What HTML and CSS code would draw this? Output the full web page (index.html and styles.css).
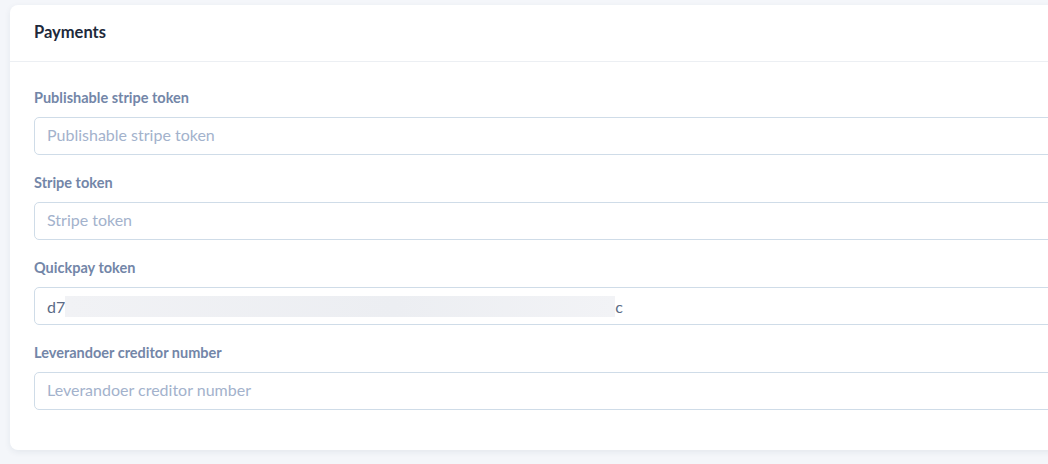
FILE: index.html
```html
<!DOCTYPE html>
<html>
<head>
  <meta charset="UTF-8">
  <title>Payments</title>
  <link rel="stylesheet" href="styles.css">
</head>
<body>
  <div class="card">
    <div class="card-header">Payments</div>
    <div class="card-body">
      <div class="field">
        <label for="pub">Publishable stripe token</label>
        <input id="pub" type="text" placeholder="Publishable stripe token">
      </div>
      <div class="field">
        <label for="stripe">Stripe token</label>
        <input id="stripe" type="text" placeholder="Stripe token">
      </div>
      <div class="field">
        <label>Quickpay token</label>
        <div class="input filled">d7<span class="redacted"></span>c</div>
      </div>
      <div class="field">
        <label for="lev">Leverandoer creditor number</label>
        <input id="lev" type="text" placeholder="Leverandoer creditor number">
      </div>
    </div>
  </div>
</body>
</html>
```

FILE: styles.css
```css
body {
  margin: 0;
  padding: 5px 0 0 10px;
  background: #f4f6fa;
  font-family: Lato, "Noto Sans", sans-serif;
  overflow: hidden;
  height: 459px;
}
.card {
  width: 1200px;
  height: 445px;
  background: white;
  border-radius: 8px;
  box-shadow: 0 2px 6px rgba(40, 60, 90, 0.08);
  box-sizing: border-box;
}
.card-header {
  height: 57px;
  padding: 0 24px 2px;
  display: flex;
  align-items: center;
  font-size: 16.5px;
  font-weight: bold;
  color: #1e2a3b;
  border-bottom: 1px solid #eceff3;
  box-sizing: border-box;
}
.card-body {
  padding: 27px 24px 0;
  display: flex;
  flex-direction: column;
  gap: 19px;
}
.field {
  display: flex;
  flex-direction: column;
  gap: 10px;
}
label {
  font-size: 14.5px;
  font-weight: bold;
  color: #7386a8;
  line-height: 18px;
}
input, .input {
  height: 38px;
  box-sizing: border-box;
  border: 1px solid #cfdce8;
  border-radius: 5px;
  padding: 0 12px 3px;
  font-family: inherit;
  font-size: 16px;
  color: #5b6b86;
  outline: none;
}
input::placeholder {
  color: #a3b2cc;
}
.input {
  display: flex;
  align-items: center;
  padding-bottom: 0;
}
.redacted {
  width: 550px;
  height: 21px;
  background: linear-gradient(90deg, #f1f2f5, #eceef2 60%, #f2f3f6);
}
```
